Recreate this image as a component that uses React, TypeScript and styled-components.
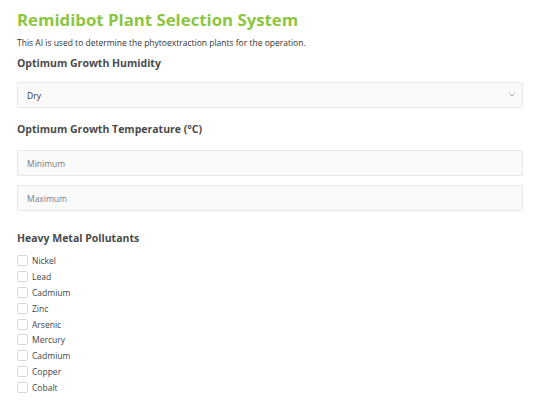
import styled, { createGlobalStyle } from "styled-components";
import * as React from "react";

const GlobalStyle = createGlobalStyle`
  body {
    margin: 0;
    background: #fff;
    font-family: "Open Sans", "Noto Sans", sans-serif;
    color: #333;
  }
`;

const Page = styled.div`
  padding: 6px 17px 0 17px;
  width: 506px;
  display: flex;
  flex-direction: column;
`;

const Title = styled.h1`
  margin: 0;
  font-size: 16.8px;
  line-height: 28px;
  font-weight: 700;
  color: #8cc63f;
`;

const Subtitle = styled.p`
  margin: 3px 0 0;
  font-size: 8.5px;
  line-height: 12px;
  color: #333;
`;

const SectionTitle = styled.h2<{ gap: number }>`
  margin: ${({ gap }) => gap}px 0 0;
  font-size: 10.5px;
  line-height: 16px;
  font-weight: 700;
  color: #4a4a4a;
`;

const Field = styled.div<{ gap: number }>`
  margin-top: ${({ gap }) => gap}px;
  height: 26px;
  box-sizing: border-box;
  border: 1px solid #e8e8ea;
  border-radius: 2px;
  background: #fafafa;
  display: flex;
  align-items: center;
  justify-content: space-between;
  padding: 0 7px 0 9px;
  font-size: 8.5px;
`;

const Value = styled.span<{ placeholder?: boolean }>`
  color: ${({ placeholder }) => (placeholder ? "#7a7a7a" : "#333")};
`;

const CheckList = styled.div`
  margin-top: 7px;
  display: flex;
  flex-direction: column;
`;

const CheckRow = styled.label`
  display: flex;
  align-items: center;
  gap: 4px;
  height: 15.8px;
  font-size: 8.5px;
  color: #444;
`;

const Box = styled.span`
  width: 11px;
  height: 11px;
  box-sizing: border-box;
  border: 1px solid #d6d6d6;
  border-radius: 2px;
  background: #fff;
`;

const metals = ["Nickel", "Lead", "Cadmium", "Zinc", "Arsenic", "Mercury", "Cadmium", "Copper", "Cobalt"];

export default function App() {
  return (
    <>
      <GlobalStyle />
      <Page>
        <Title>Remidibot Plant Selection System</Title>
        <Subtitle>This AI is used to determine the phytoextraction plants for the operation.</Subtitle>

        <SectionTitle gap={6}>Optimum Growth Humidity</SectionTitle>
        <Field gap={11}>
          <Value>Dry</Value>
          <svg width="6" height="4" viewBox="0 0 6 4">
            <path d="M0.5 0.5 L3 3 L5.5 0.5" fill="none" stroke="#999" strokeWidth="0.9" />
          </svg>
        </Field>

        <SectionTitle gap={13}>Optimum Growth Temperature (°C)</SectionTitle>
        <Field gap={13}>
          <Value placeholder>Minimum</Value>
        </Field>
        <Field gap={9}>
          <Value placeholder>Maximum</Value>
        </Field>

        <SectionTitle gap={19}>Heavy Metal Pollutants</SectionTitle>
        <CheckList>
          {metals.map((m, i) => (
            <CheckRow key={i}>
              <Box />
              {m}
            </CheckRow>
          ))}
        </CheckList>
      </Page>
    </>
  );
}
